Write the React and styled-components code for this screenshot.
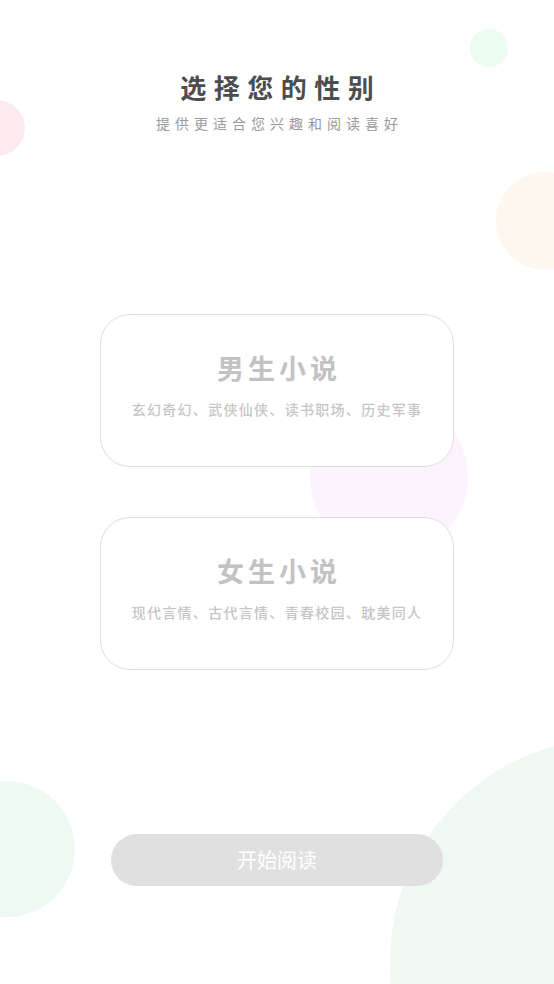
import React, { useState } from "react";
import styled, { createGlobalStyle } from "styled-components";

const GlobalStyle = createGlobalStyle`
  html, body {
    margin: 0;
    padding: 0;
    background: #fff;
  }
  body {
    font-family: "Noto Sans CJK SC", "Noto Sans", sans-serif;
  }
`;

const Page = styled.div`
  position: relative;
  width: 554px;
  height: 984px;
  overflow: hidden;
  background: #fff;
  display: flex;
  flex-direction: column;
  align-items: center;
`;

const Bubble = styled.div`
  position: absolute;
  border-radius: 50%;
  left: ${props => props.x - props.r}px;
  top: ${props => props.y - props.r}px;
  width: ${props => props.r * 2}px;
  height: ${props => props.r * 2}px;
  background: ${props => props.color};
  z-index: 0;
`;

const Header = styled.header`
  position: relative;
  z-index: 1;
  padding-top: 69px;
  display: flex;
  flex-direction: column;
  align-items: center;
`;

const Title = styled.h1`
  margin: 0;
  font-size: 26px;
  line-height: 36px;
  font-weight: 700;
  letter-spacing: 7.5px;
  padding-left: 7.5px;
  color: #4d4d4d;
`;

const Subtitle = styled.p`
  margin: 8px 0 0;
  font-size: 14px;
  line-height: 20px;
  letter-spacing: 5px;
  padding-left: 5px;
  color: #9a9a9a;
`;

const CardList = styled.div`
  position: relative;
  z-index: 1;
  margin-top: 181px;
  display: flex;
  flex-direction: column;
  gap: 50px;
`;

const Card = styled.div`
  box-sizing: border-box;
  width: 354px;
  height: 153px;
  border: 1px solid ${props => (props.active ? "#7bd6a0" : "#dedede")};
  border-radius: 30px;
  background: #fff;
  display: flex;
  flex-direction: column;
  align-items: center;
  padding-top: 35px;
  cursor: pointer;
`;

const CardTitle = styled.div`
  font-size: 27px;
  line-height: 36px;
  font-weight: 700;
  letter-spacing: 4px;
  padding-left: 4px;
  color: ${props => (props.active ? "#555" : "#c2c2c2")};
`;

const CardDesc = styled.div`
  margin-top: 13px;
  font-size: 14px;
  line-height: 20px;
  font-weight: 500;
  letter-spacing: 1.3px;
  color: #c6c6c6;
`;

const StartButton = styled.button`
  position: relative;
  z-index: 1;
  margin-top: 164px;
  width: 332px;
  height: 52px;
  padding: 0;
  border: none;
  border-radius: 26px;
  background: ${props => (props.enabled ? "#5cc98b" : "#e0e0e0")};
  color: #fff;
  font-family: "Noto Sans CJK SC", "Noto Sans", sans-serif;
  font-size: 20px;
  line-height: 50px;
  font-weight: 400;
  cursor: pointer;
`;

const bubbles = [
  { x: 489, y: 48, r: 19, color: "#ecfcf1" },
  { x: -3, y: 128, r: 28, color: "#fdeaef" },
  { x: 545, y: 221, r: 49, color: "#fef7f0" },
  { x: 389, y: 477, r: 79, color: "#fdf3fc" },
  { x: 7, y: 849, r: 68, color: "#eff9f4" },
  { x: 614, y: 962, r: 224, color: "#eff8f3" },
];

const genders = [
  { id: "male", name: "男生小说", desc: "玄幻奇幻、武侠仙侠、读书职场、历史军事" },
  { id: "female", name: "女生小说", desc: "现代言情、古代言情、青春校园、耽美同人" },
];

const App = () => {
  const [picked, setPicked] = useState(null);

  return (
    <Page>
      <GlobalStyle />
      {bubbles.map((b, i) => (
        <Bubble key={i} x={b.x} y={b.y} r={b.r} color={b.color} />
      ))}
      <Header>
        <Title>选择您的性别</Title>
        <Subtitle>提供更适合您兴趣和阅读喜好</Subtitle>
      </Header>
      <CardList>
        {genders.map(g => (
          <Card key={g.id} active={picked === g.id} onClick={() => setPicked(g.id)}>
            <CardTitle active={picked === g.id}>{g.name}</CardTitle>
            <CardDesc>{g.desc}</CardDesc>
          </Card>
        ))}
      </CardList>
      <StartButton enabled={!!picked}>开始阅读</StartButton>
    </Page>
  );
};

export default App;
